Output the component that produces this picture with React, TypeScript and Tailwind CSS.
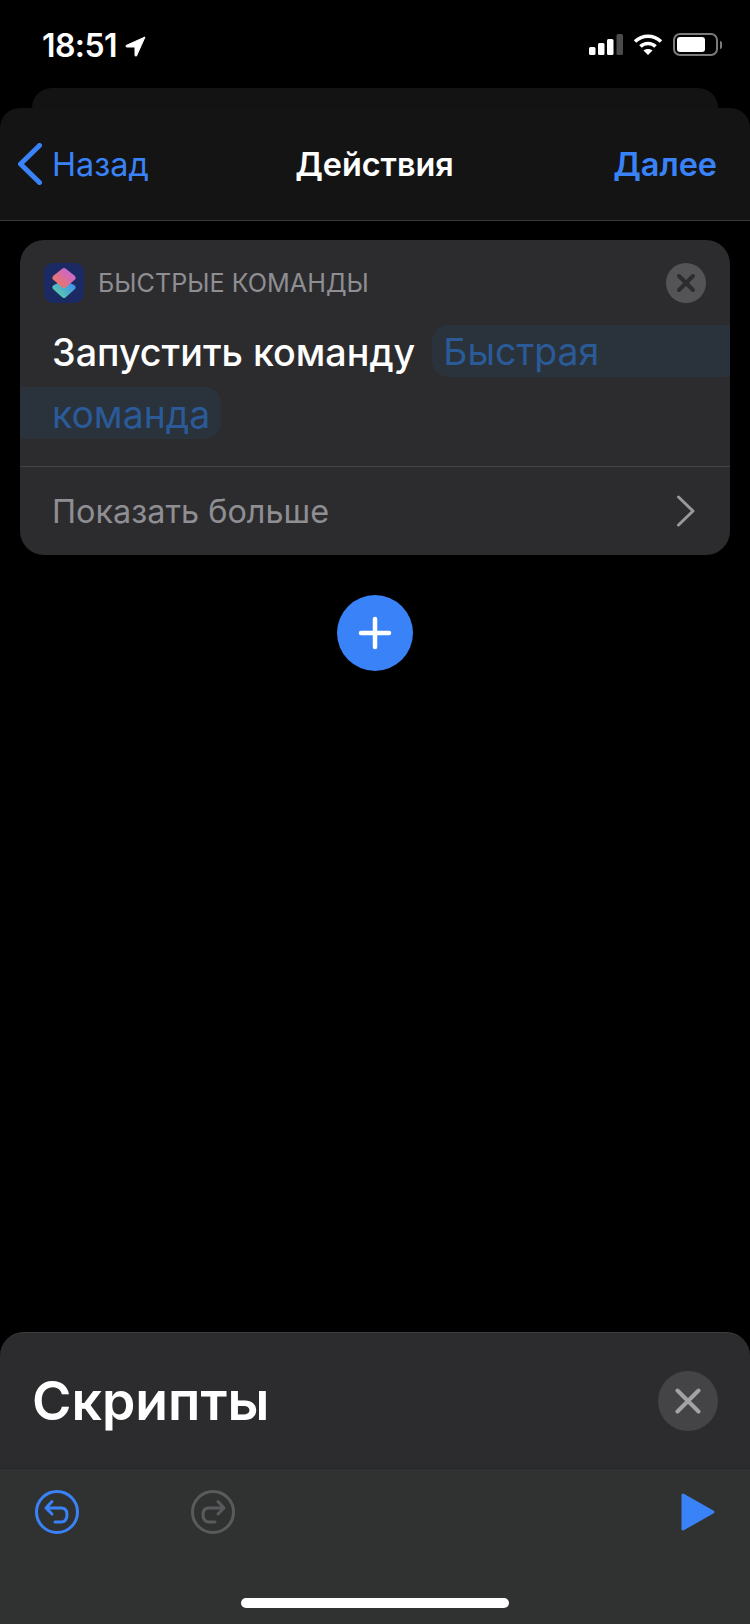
import React from 'react';

const StatusBar = () => (
  <div className="h-[88px] flex items-start justify-between pl-[42px] pr-[28px] pt-[33px]">
    <div className="flex items-center">
      <span className="text-white text-[32px] leading-[26px] font-semibold tracking-[-0.6px]">18:51</span>
      <svg className="ml-[8px]" width="21" height="21" viewBox="0 0 21 21">
        <path d="M20 1 L1 9.5 Q0.5 11 2 11 L10 11 L10 19 Q10 20.5 11.500 20 Z" fill="#fff" stroke="#fff" strokeLinejoin="round" />
      </svg>
    </div>
    <div className="flex items-center gap-[10px]">
      <svg width="34" height="21" viewBox="0 0 34 21">
        <rect x="0" y="13" width="6.500" height="8" rx="1.500" fill="#fff" />
        <rect x="9" y="9" width="6.500" height="12" rx="1.500" fill="#fff" />
        <rect x="18" y="5" width="6.500" height="16" rx="1.500" fill="#fff" />
        <rect x="27.500" y="0" width="6.500" height="21" rx="1.500" fill="#4b4b4b" />
      </svg>
      <svg width="30" height="21" viewBox="0 0 30 21" fill="none" stroke="#fff" strokeWidth="3.600">
        <path d="M2 7.500 C9.500 0.500 20.500 0.500 28 7.500" />
        <path d="M7.500 12.500 C11.500 8.500 18.500 8.500 22.500 12.500" />
        <path d="M15 21 L10.500 16.500 C13 14.500 17 14.500 19.500 16.500 Z" fill="#fff" stroke="none" />
      </svg>
      <div className="flex items-center gap-[2px]">
        <div className="w-[45px] h-[23px] rounded-[7px] border-2 border-[#7b7b7b] p-[2px]">
          <div className="w-[28px] h-full rounded-[3px] bg-white" />
        </div>
        <div className="w-[2px] h-[8px] rounded-r-full bg-[#7b7b7b]" />
      </div>
    </div>
  </div>
);

const Header = () => (
  <div className="h-[113px] rounded-t-[20px] bg-[#141414] border-b border-[#3a3a3c] flex items-center justify-between pl-[18px] pr-[33px] text-[32.4px] leading-[40px]">
    <div className="flex items-center gap-[10px] w-[214px] text-[#3a82f7]">
      <svg width="24" height="42" viewBox="0 0 24 42" fill="none" stroke="#3a82f7" strokeWidth="5" strokeLinecap="round" strokeLinejoin="round">
        <path d="M21.500 2.500 L2.500 21 L21.500 39.500" />
      </svg>
      <span className="pt-[2px]">Назад</span>
    </div>
    <span className="pt-[2px] text-white font-semibold">Действия</span>
    <span className="pt-[2px] w-[200px] text-right text-[#3a82f7] font-semibold">Далее</span>
  </div>
);

const ShortcutsIcon = () => (
  <svg width="40" height="40" viewBox="0 0 40 40" className="shrink-0">
    <defs>
      <linearGradient id="topGrad" x1="0.1" y1="0.8" x2="0.8" y2="0.1">
        <stop offset="0" stopColor="#f0765c" />
        <stop offset="1" stopColor="#c566d8" />
      </linearGradient>
      <linearGradient id="bottomGrad" x1="0.1" y1="0.9" x2="0.9" y2="0.2">
        <stop offset="0" stopColor="#5fd3a0" />
        <stop offset="1" stopColor="#3f8ff0" />
      </linearGradient>
    </defs>
    <rect width="40" height="40" rx="9" fill="#1b2a63" />
    <path d="M20 17 L31 22.500 Q32.500 24.500 31 26 L21.500 34.500 Q20 35.500 18.500 34.500 L9 26 Q7.500 24.500 9 22.500 Z" fill="url(#bottomGrad)" />
    <path d="M18.500 5.500 Q20 4.500 21.500 5.500 L31 13 Q32.500 15 31 16.500 L21.500 24.500 Q20 25.500 18.500 24.500 L9 16.500 Q7.500 15 9 13 Z" fill="url(#topGrad)" />
  </svg>
);

const ActionCard = () => (
  <div className="mt-[19px] mx-[20px] rounded-[24px] bg-[#2c2c2e] h-[315px] flex flex-col">
    <div className="flex items-center h-[40px] mt-[23px] pl-[24px] pr-[24px]">
      <ShortcutsIcon />
      <span className="ml-[14px] flex-1 text-[25.2px] leading-[30px] text-[#8e8e93]">БЫСТРЫЕ КОМАНДЫ</span>
      <div className="w-[40px] h-[40px] rounded-full bg-[#545456] flex items-center justify-center">
        <svg width="20" height="20" viewBox="0 0 20 20" stroke="#2c2c2e" strokeWidth="4" strokeLinecap="round">
          <path d="M3 3 L17 17 M17 3 L3 17" />
        </svg>
      </div>
    </div>
    <div className="flex h-[52px] mt-[22px] items-center">
      <span className="pl-[32px] pt-[2px] text-white text-[37.7px] font-medium leading-[44px] whitespace-nowrap">Запустить команду</span>
      <div className="ml-[17px] flex-1 self-stretch rounded-l-[16px] bg-[#2a323b] pl-[11px] pt-[2px] flex items-center text-[#2a5a98] text-[37.4px] leading-[44px]">Быстрая</div>
    </div>
    <div className="mt-[10px] h-[52px] w-[201px] rounded-r-[16px] bg-[#2a323b] pl-[32px] pt-[3px] flex items-center text-[#2a5a98] text-[37.4px] leading-[44px]">команда</div>
    <div className="mt-[27px] h-[89px] border-t border-[#434345] flex items-center justify-between pl-[32px] pr-[34px]">
      <span className="pt-[2px] text-[#8e8e93] text-[32.4px] leading-[40px]">Показать больше</span>
      <svg width="20" height="32" viewBox="0 0 20 32" fill="none" stroke="#98989d" strokeWidth="3" strokeLinecap="round" strokeLinejoin="round">
        <path d="M2.500 2 L17 16 L2.500 30" />
      </svg>
    </div>
  </div>
);

const BottomSheet = () => (
  <div className="rounded-t-[24px] bg-[#2c2c2e] border-t border-[#3c3c3e]">
    <div className="h-[135px] flex items-center justify-between pl-[32px] pr-[32px]">
      <span className="text-white text-[53.5px] leading-[60px] font-semibold">Скрипты</span>
      <div className="w-[60px] h-[60px] rounded-full bg-[#444446] flex items-center justify-center">
        <svg width="26" height="26" viewBox="0 0 26 26" stroke="#a2a2a7" strokeWidth="4" strokeLinecap="round">
          <path d="M2.500 2.500 L23.500 23.500 M23.500 2.500 L2.500 23.500" />
        </svg>
      </div>
    </div>
    <div className="h-[156px] bg-[#303232] border-t border-[#262728] flex flex-col">
      <div className="flex items-center h-[44px] mt-[21px] pl-[35px] pr-[35px]">
        <svg width="44" height="44" viewBox="0 0 44 44" fill="none" stroke="#3a82f7" strokeWidth="3" strokeLinecap="round" strokeLinejoin="round">
          <circle cx="22" cy="22" r="20.500" />
          <path d="M17 11.500 L11 18 L17 24 M11 18 H26 Q32 18 32 24.500 Q32 32 26 32 H20" />
        </svg>
        <svg className="ml-[112px]" width="44" height="44" viewBox="0 0 44 44" fill="none" stroke="#5a5a5c" strokeWidth="3" strokeLinecap="round" strokeLinejoin="round">
          <circle cx="22" cy="22" r="20.500" />
          <path d="M27 11.500 L33 18 L27 24 M33 18 H18 Q12 18 12 24.500 Q12 32 18 32 H24" />
        </svg>
        <svg className="ml-auto" width="34" height="38" viewBox="0 0 34 38">
          <path d="M2 2 L32 19 L2 36 Z" fill="#3a82f7" stroke="#3a82f7" strokeWidth="3" strokeLinejoin="round" />
        </svg>
      </div>
      <div className="mt-auto mb-[16px] mx-auto w-[268px] h-[10px] rounded-full bg-white" />
    </div>
  </div>
);

export default function App() {
  return (
    <div className="w-[750px] h-[1624px] bg-black flex flex-col font-['Inter','Noto_Sans',sans-serif] overflow-hidden">
      <StatusBar />
      <div className="h-[20px] mx-[32px] rounded-t-[20px] bg-[#131313]" />
      <Header />
      <ActionCard />
      <div className="mt-[40px] mx-auto w-[76px] h-[76px] rounded-full bg-[#3a82f7] flex items-center justify-center">
        <svg width="34" height="34" viewBox="0 0 34 34" stroke="#fff" strokeWidth="4.500" strokeLinecap="round">
          <path d="M17 3 V31 M3 17 H31" />
        </svg>
      </div>
      <div className="mt-auto">
        <BottomSheet />
      </div>
    </div>
  );
}
